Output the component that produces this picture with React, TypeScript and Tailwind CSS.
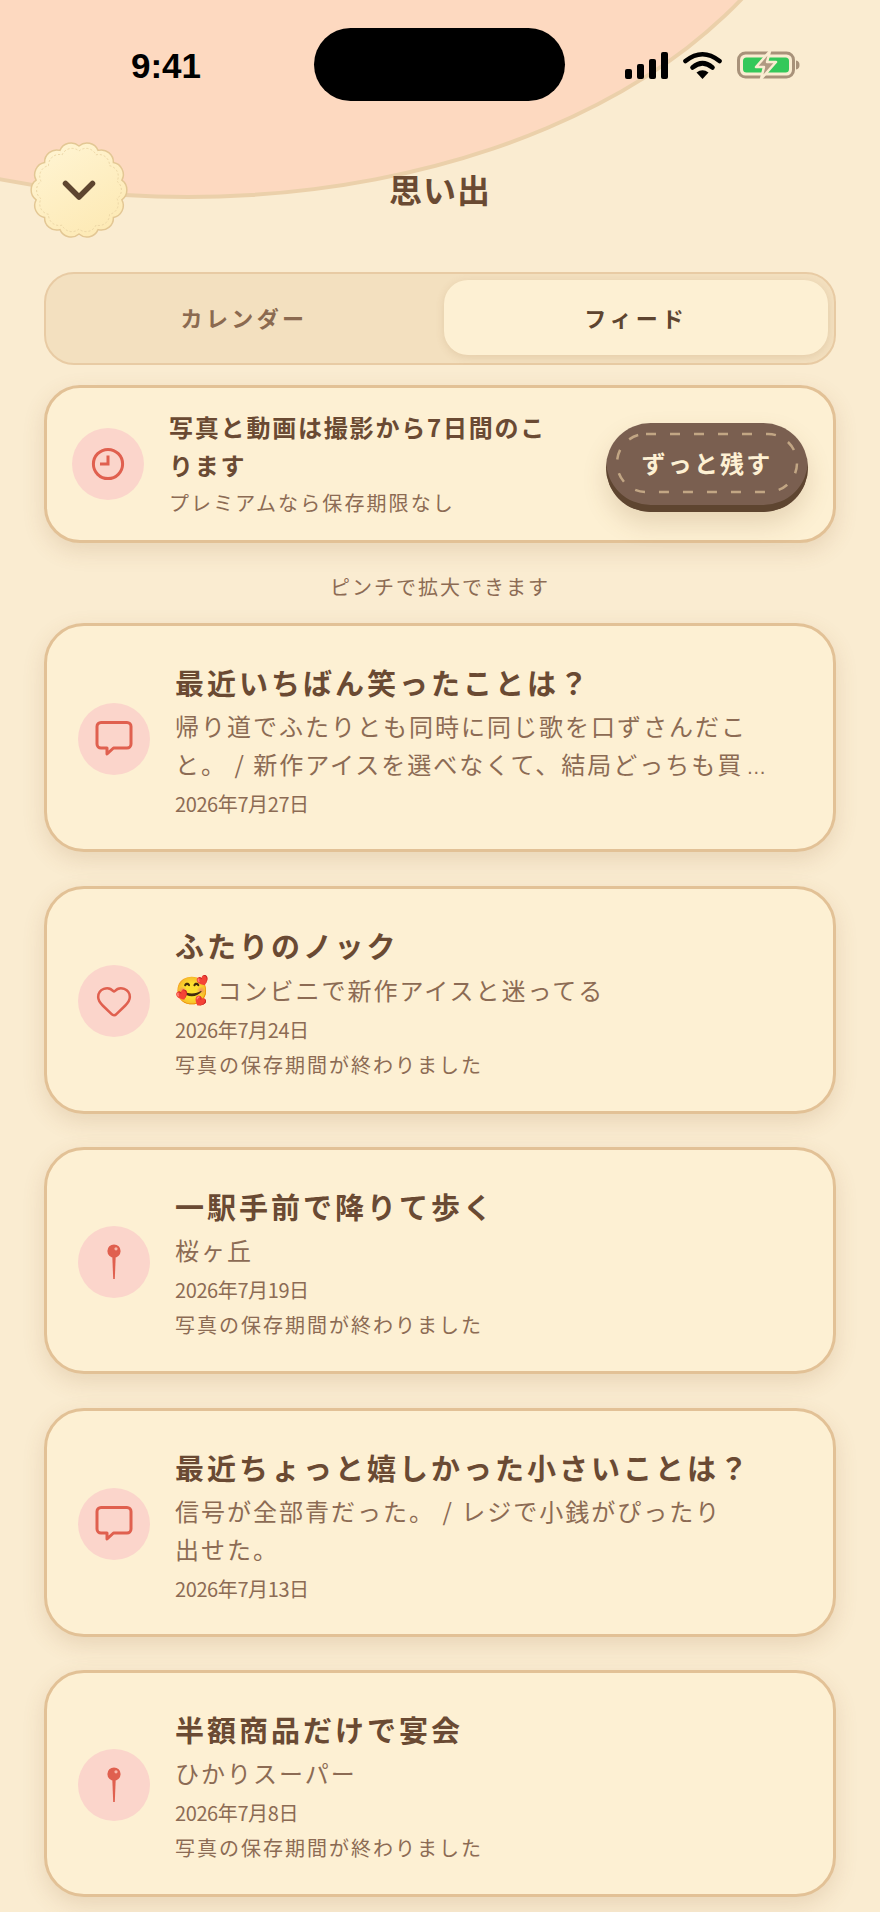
import React from 'react';
import { Heart } from 'lucide-react';

type IconKind = 'chat' | 'heart' | 'pin';

type Memory = {
  title: string;
  body: React.ReactNode;
  date: string;
  expired?: boolean;
  icon: IconKind;
};

const memories: Memory[] = [
  {
    title: '最近いちばん笑ったことは？',
    body: (
      <>
        帰り道でふたりとも同時に同じ歌を口ずさんだこと。 / 新作アイスを選べなくて、結局どっちも買
        <span className="ml-[3px] font-['Liberation_Sans',sans-serif] text-[20px] leading-none tracking-normal">…</span>
      </>
    ),
    date: '2026年7月27日',
    icon: 'chat',
  },
  {
    title: 'ふたりのノック',
    body: (
      <>
        <span className="inline-block mr-[1px] text-[27px] leading-[38px] tracking-normal">🥰</span> コンビニで新作アイスと迷ってる
      </>
    ),
    date: '2026年7月24日',
    expired: true,
    icon: 'heart',
  },
  {
    title: '一駅手前で降りて歩く',
    body: '桜ヶ丘',
    date: '2026年7月19日',
    expired: true,
    icon: 'pin',
  },
  {
    title: '最近ちょっと嬉しかった小さいことは？',
    body: (
      <>
        信号が全部青だった。 / レジで小銭がぴったり
        <br />
        出せた。
      </>
    ),
    date: '2026年7月13日',
    icon: 'chat',
  },
  {
    title: '半額商品だけで宴会',
    body: 'ひかりスーパー',
    date: '2026年7月8日',
    expired: true,
    icon: 'pin',
  },
];

// scalloped edge for the round back button
const scallopPath = (radius: number, bumps: number, center: number) => {
  const chord = 2 * radius * Math.sin(Math.PI / bumps);
  const arc = (chord * 0.62).toFixed(2);
  let d = '';
  for (let i = 0; i <= bumps; i++) {
    const a = (i / bumps) * Math.PI * 2 - Math.PI / 2;
    const x = (center + radius * Math.cos(a)).toFixed(2);
    const y = (center + radius * Math.sin(a)).toFixed(2);
    d += i === 0 ? `M${x} ${y}` : ` A${arc} ${arc} 0 0 1 ${x} ${y}`;
  }
  return d + ' Z';
};

const StatusIcons = () => (
  <div className="flex items-center pl-[60px]">
    <div className="flex items-end gap-[5px] h-[27px]">
      <div className="w-[7px] h-[10px] rounded-[2px] bg-black" />
      <div className="w-[7px] h-[15px] rounded-[2px] bg-black" />
      <div className="w-[7px] h-[20px] rounded-[2px] bg-black" />
      <div className="w-[7px] h-[27px] rounded-[2px] bg-black" />
    </div>
    <svg width="39" height="28" viewBox="0 0 39 28" className="ml-[15px]">
      <path d="M2.5 10 Q19.5 -3.5 36.5 10" fill="none" stroke="#000" strokeWidth="4.6" strokeLinecap="round" />
      <path d="M9.5 16.5 Q19.5 8 29.5 16.5" fill="none" stroke="#000" strokeWidth="4.6" strokeLinecap="round" />
      <path d="M13.5 21.5 Q19.5 17 25.5 21.5 L19.5 28 Z" fill="#000" />
    </svg>
    <svg width="63" height="30" viewBox="0 0 63 30" className="ml-[15px]">
      <rect x="1.5" y="3" width="55" height="24" rx="7" fill="none" stroke="#a8927a" strokeWidth="3" />
      <rect x="6" y="7.5" width="46" height="15" rx="3.5" fill="#34c85a" />
      <path d="M59 10.5 c2.5 .5 3.5 2 3.5 4.5 s-1 4 -3.5 4.5 Z" fill="#a8927a" />
      <path
        d="M33 1 L19 17 H27 L24 29 L39 12 H30 Z"
        fill="#b09a82"
        stroke="#faecd1"
        strokeWidth="2.5"
        strokeLinejoin="round"
      />
    </svg>
  </div>
);

const BackButton = () => (
  <button className="w-[94px] h-[94px]">
    <svg width="94" height="94" viewBox="0 0 94 94" className="overflow-visible">
      <defs>
        <linearGradient id="cookie" x1="0.2" y1="0" x2="0.8" y2="1">
          <stop offset="0" stopColor="#fff4d2" />
          <stop offset="1" stopColor="#fde9b3" />
        </linearGradient>
      </defs>
      <path d={scallopPath(44, 14, 47)} fill="url(#cookie)" stroke="#e3c794" strokeWidth="1.5" />
      <path d={scallopPath(39, 14, 47)} fill="none" stroke="#ecd6a6" strokeWidth="1" strokeDasharray="2 2" />
      <path d="M33.5 40.5 L47 54 L60.5 40.5" fill="none" stroke="#5e4530" strokeWidth="5.5" strokeLinecap="round" strokeLinejoin="round" />
    </svg>
  </button>
);

const ClockIcon = () => (
  <svg width="34" height="34" viewBox="0 0 34 34" fill="none" stroke="#e0604f" strokeWidth="3">
    <circle cx="17" cy="17" r="14.6" />
    <path d="M17 8.5 V17 H9" />
  </svg>
);

const ChatIcon = () => (
  <svg width="40" height="40" viewBox="0 0 40 40" fill="none" stroke="#e0604f" strokeWidth="3" strokeLinejoin="round">
    <path d="M7 3.5 H33 A4 4 0 0 1 37 7.5 V25 A4 4 0 0 1 33 29 H19.5 L13 35 V29 H7 A4 4 0 0 1 3 25 V7.5 A4 4 0 0 1 7 3.5 Z" />
  </svg>
);

const PinIcon = () => (
  <svg width="16" height="36" viewBox="0 0 16 36">
    <path d="M6.2 10 H9.8 L8.8 35 H7.2 Z" fill="#e0604f" />
    <circle cx="8" cy="7" r="6.6" fill="#e0604f" />
    <circle cx="10" cy="4.8" r="1.6" fill="#f8b9ab" />
  </svg>
);

const MemoryIcon = ({ kind }: { kind: IconKind }) => (
  <div className="w-[72px] h-[72px] -mt-[5px] shrink-0 rounded-full bg-[#fbd5cb] flex items-center justify-center">
    {kind === 'chat' && <ChatIcon />}
    {kind === 'heart' && <Heart size={38} color="#e0604f" strokeWidth={1.6} />}
    {kind === 'pin' && <PinIcon />}
  </div>
);

const MemoryCard = ({ memory }: { memory: Memory }) => (
  <div className="flex items-center gap-[25px] pl-[31px] pt-[36px] pb-[28px] rounded-[40px] border-[3px] border-[#e2c196] bg-[#fdf0d3] shadow-[0_8px_22px_rgba(140,95,50,0.16)]">
    <MemoryIcon kind={memory.icon} />
    <div className="w-[615px]">
      <h3 className="text-[29px] leading-[40px] tracking-[3px] font-bold text-[#6a4a33]">{memory.title}</h3>
      <p className="mt-[5px] text-[24px] leading-[38px] tracking-[2px] text-[#8c6b54]">{memory.body}</p>
      <p className="mt-[3px] text-[20px] leading-[35px] tracking-[-0.4px] text-[#8c6b54]">{memory.date}</p>
      {memory.expired && (
        <p className="text-[20px] leading-[36px] tracking-[2px] text-[#8c6b54]">写真の保存期間が終わりました</p>
      )}
    </div>
  </div>
);

export default function App() {
  return (
    <div className="relative w-[880px] h-[1912px] overflow-hidden bg-[#faecd1] font-['Noto_Sans_CJK_JP',sans-serif]">
      {/* peach blob behind the status bar */}
      <div className="absolute left-[-460px] top-[-622px] w-[1296px] h-[821px] rounded-[50%] bg-[#fdd9c0] border-[4px] border-[#ebd0aa]" />

      <div className="relative">
        <div className="flex items-start h-[143px]">
          <div className="w-[314px] pl-[131px] pt-[46px] font-['Liberation_Sans',sans-serif] font-bold text-[35px] leading-[40px] text-black">
            9:41
          </div>
          <div className="w-[251px] h-[73px] mt-[28px] rounded-[37px] bg-black" />
          <div className="pt-[50px]">
            <StatusIcons />
          </div>
        </div>

        <div className="grid grid-cols-[94px_1fr_94px] items-center h-[94px] px-[32px]">
          <BackButton />
          <h1 className="text-center text-[33px] tracking-[1px] font-bold text-[#6a4a33]">思い出</h1>
        </div>

        <div className="mt-[35px] mx-[44px] grid grid-cols-2 gap-2 h-[93px] pt-[6px] pb-[8px] px-[6px] rounded-[30px] border-2 border-[#e8cba4] bg-[#f3e0bf]">
          <div className="flex items-center justify-center text-[22px] tracking-[3.4px] font-bold text-[#8b6a50]">カレンダー</div>
          <div className="flex items-center justify-center rounded-[24px] bg-[#fdf0d3] shadow-[0_2px_8px_rgba(150,100,50,0.16)] text-[22px] tracking-[4px] font-bold text-[#5e4530]">
            フィード
          </div>
        </div>

        <div className="mt-[20px] mx-[44px] h-[158px] flex items-center pl-[25px] pr-[25px] rounded-[36px] border-[3px] border-[#e2c196] bg-[#fdf0d3] shadow-[0_8px_22px_rgba(140,95,50,0.16)]">
          <div className="w-[72px] h-[72px] shrink-0 rounded-full bg-[#fbd5cb] flex items-center justify-center">
            <ClockIcon />
          </div>
          <div className="ml-[25px] w-[385px]">
            <p className="text-[24px] leading-[38px] tracking-[1.8px] font-bold text-[#6a4a33]">写真と動画は撮影から7日間のこります</p>
            <p className="mt-[2px] text-[20px] leading-[34px] tracking-[2.1px] text-[#8c6b54]">プレミアムなら保存期限なし</p>
          </div>
          <button className="relative ml-auto mt-[7px] w-[202px] h-[89px] pb-[10px] rounded-[45px] bg-[#7a5f50] shadow-[inset_0_-7px_0_#5e4530,0_12px_24px_rgba(130,90,50,0.18)] text-[24px] tracking-[2.2px] font-bold text-[#fdf0d3]">
            ずっと残す
            <svg width="202" height="89" viewBox="0 0 202 89" className="absolute left-0 top-0" fill="none">
              <rect x="11" y="11" width="180" height="58" rx="29" stroke="#c2a684" strokeWidth="2.5" strokeDasharray="10 14" />
            </svg>
          </button>
        </div>

        <p className="mt-[29px] h-[30px] text-center text-[20px] leading-[30px] tracking-[2px] text-[#8c6b54]">ピンチで拡大できます</p>

        <div className="mt-[21px] mx-[44px] flex flex-col gap-[33.5px]">
          {memories.map((memory) => (
            <MemoryCard key={memory.title} memory={memory} />
          ))}
        </div>
      </div>
    </div>
  );
}
